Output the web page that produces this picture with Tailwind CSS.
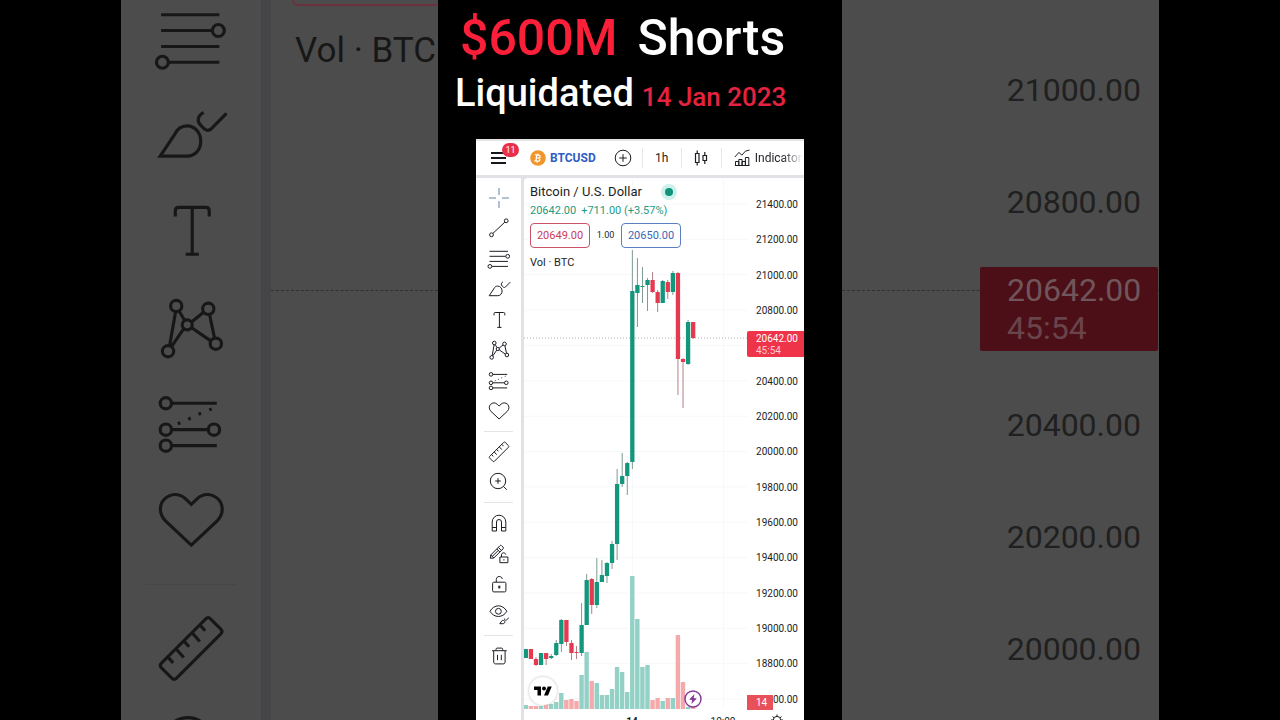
<!DOCTYPE html>
<html lang="en">
<head>
    <meta charset="UTF-8">
    <meta name="viewport" content="width=device-width, initial-scale=1.0">
    <title>$600M Shorts Liquidated</title>
    <script src="https://cdn.jsdelivr.net/npm/@tailwindcss/browser@4"></script>
</head>
<body class="bg-black font-[Roboto,sans-serif]">
    <!-- Icon sprite -->
    <svg class="hidden">
        <symbol id="i-cross" viewBox="0 0 28 28"><path d="M4 14h7M17 14h7M14 4v7M14 17v7"/></symbol>
        <symbol id="i-trend" viewBox="0 0 28 28"><circle cx="6.5" cy="20.8" r="1.9"/><circle cx="21.2" cy="6.8" r="1.9"/><path d="M7.9 19.4L19.8 8.2"/></symbol>
        <symbol id="i-fib" viewBox="0 0 28 28"><path d="M4.5 6.3H23M4.5 11.3h16.2M4.5 16.4H23M7 21.4h16"/><circle cx="22.7" cy="11.3" r="1.9"/><circle cx="4.9" cy="21.4" r="1.9"/></symbol>
        <symbol id="i-brush" viewBox="0 0 28 28"><path d="M4.200 20.700L8.700 14c.9-2 2.300-2.900 4-2.900 2.500 0 4.400 2.100 4.400 4.900 0 2.700-1.800 4.700-4.300 4.700zM18 6.800c-2 1.200-2.200 2.800-.8 4.200l1.100 1.100c.8.600 1.400.6 2.200-.1l4.800-4.900"/></symbol>
        <symbol id="i-text" viewBox="0 0 28 28"><path d="M9 9.400V7.600c0-.7.4-1.100 1.100-1.100h8.600c.7 0 1.100.4 1.100 1.100v1.800M14.400 6.500v14.900M12.300 21.400h4.200"/></symbol>
        <symbol id="i-pattern" viewBox="0 0 28 28"><circle cx="9.3" cy="7" r="1.8"/><circle cx="19.5" cy="7.9" r="1.8"/><circle cx="12.8" cy="13" r="1.6"/><circle cx="6.7" cy="21.4" r="1.8"/><circle cx="21.9" cy="19" r="1.8"/><path d="M9.1 8.8L7.2 19.6M10.2 8.6l1.8 3M11.7 14.2l-3.9 5.7M14.2 12.1l3.8-3.1M19.9 9.7l1.600 7.500M14.200 13.900l6.100 4.200"/></symbol>
        <symbol id="i-predict" viewBox="0 0 28 28"><circle cx="6" cy="7.4" r="1.8"/><circle cx="6" cy="15.8" r="1.8"/><circle cx="6" cy="20.9" r="1.8"/><circle cx="21.3" cy="15.8" r="1.8"/><path d="M7.8 7.4h14.4M7.8 15.8h11.7M7.8 20.9h14.4M9.800 13.900l.8-.3M13.100 12.500l.8-.4M16.400 10.900l.8-.3M19.800 9.500l.8-.3"/></symbol>
        <symbol id="i-heart" viewBox="0 0 28 28"><path d="M14.1 22L5.800 14.200C3.800 12 3.800 9.200 5.500 7.400c2-2 4.700-2 6.700-.2l1.900 1.800L16 7.200c1.900-1.800 4.700-1.800 6.700.2 1.700 1.900 1.700 4.600-.3 6.800z"/></symbol>
        <symbol id="i-ruler" viewBox="0 0 28 28"><path d="M4.600 18.500L18.700 4.400c.5-.5 1-.5 1.500 0l3.300 3.300c.5.500.5 1 0 1.500L9.400 23.300c-.5.500-1 .5-1.500 0L4.600 20c-.5-.5-.5-1 0-1.500zM6.600 16.500l1.700 1.900M9.200 13.900l2.500 2.800M11.700 11.400l1.700 1.900M14.300 8.800l2.500 2.800M16.800 6.300l1.700 1.900"/></symbol>
        <symbol id="i-zoom" viewBox="0 0 28 28"><circle cx="13" cy="13" r="7.700"/><path d="M18.500 18.500l3.300 3.300M10.200 13h5.600M13 10.200v5.600"/></symbol>
        <symbol id="i-magnet" viewBox="0 0 28 28"><path d="M7.200 22v-9a6.800 6.800 0 0 1 13.600 0v9h-4.300v-9a2.500 2.500 0 0 0-5 0v9zM7.200 18.500h4.300M16.500 18.500h4.300"/></symbol>
        <symbol id="i-penlock" viewBox="0 0 28 28"><path d="M5.300 18.300l.5-3.400L15 5.700c.5-.5 1.100-.5 1.600 0l1.500 1.500c.5.500.5 1.100 0 1.600l-9.300 9.200zM13.300 7.400l3.100 3.100M11.800 8.900l3 3.100M5.800 14.900l3 3.100M7.300 16.400l6-6M14.900 17h8v5.700h-8zM16.500 17v-2.200c0-2.500 3.900-2.700 4.200-.3M18.900 19.200v1.300"/></symbol>
        <symbol id="i-lock" viewBox="0 0 28 28"><rect x="7.600" y="12.200" width="13.300" height="9.700" rx="1.200"/><path d="M11.300 12.200V9.400c0-3.700 5.600-3.900 6-.4"/><path d="M14.300 15.700v2.700" stroke-width="2"/></symbol>
        <symbol id="i-eye" viewBox="0 0 28 28"><path d="M5 10.300C9 3 17.800 3 21.800 10.300 17.800 17.200 9 17.200 5 10.300z"/><circle cx="13.400" cy="10.300" r="2.900"/><path d="M14.800 22.700l1.700-2.500c1-1.300 3-1 3.300.5.200 1.200-.8 2-1.900 2zM19.600 17.600c-.5 1.200.7 2.100 1.700 1.500l2.500-2.300"/></symbol>
        <symbol id="i-trash" viewBox="0 0 28 28"><path d="M7 8.700h14.700M11 8.500V7.300c0-.8.400-1.200 1.200-1.200h4.300c.8 0 1.200.4 1.200 1.200v1.200M8.700 9v11c0 1.200.7 1.900 1.900 1.900h7.600c1.200 0 1.900-.7 1.900-1.900V9M12.500 12.800v5.400M16.300 12.800v5.400"/></symbol>
    </svg>

    <main class="flex h-screen overflow-hidden px-[121px]">
        <!-- Enlarged backdrop, left -->
        <section class="flex min-w-0 flex-1 overflow-hidden bg-[#4c4c4c] text-[#171717]" aria-hidden="true">
            <div class="w-[140px] shrink-0 fill-none stroke-current stroke-1">
                <div class="-mt-[5px] flex h-[569px] flex-col items-center justify-between">
                    <svg class="size-[88px]"><use href="#i-fib"/></svg>
                    <svg class="size-[88px]"><use href="#i-brush"/></svg>
                    <svg class="size-[88px]"><use href="#i-text"/></svg>
                    <svg class="size-[88px]"><use href="#i-pattern"/></svg>
                    <svg class="size-[88px]"><use href="#i-predict"/></svg>
                    <svg class="size-[88px]"><use href="#i-heart"/></svg>
                </div>
                <div class="mx-6 mt-5 h-px bg-[#464646]"></div>
                <div class="mt-5 flex flex-col items-center gap-2">
                    <svg class="size-[88px]"><use href="#i-ruler"/></svg>
                    <svg class="size-[88px]"><use href="#i-zoom"/></svg>
                </div>
            </div>
            <div class="w-[10px] shrink-0 bg-[#454547]"></div>
            <div class="min-w-0 flex-1">
                <div class="ml-[21px] h-[6px] rounded-bl-lg border-b-2 border-l-2 border-[#6b323d]"></div>
                <p class="mt-[25px] pl-6 text-[35px] leading-10 whitespace-nowrap">Vol · BTC</p>
                <div class="mt-[219px] border-t border-dashed border-[#303030]"></div>
            </div>
        </section>

        <!-- Video frame -->
        <section class="flex w-[404px] shrink-0 flex-col">
            <h1 class="h-[139px] shrink-0 pt-2 font-medium whitespace-nowrap text-white">
                <span class="flex items-baseline gap-5 pl-[22px] text-[50px] leading-[61px]"><span class="text-[#fb1f3a]">$600M</span><span>Shorts</span></span>
                <span class="flex items-baseline gap-2 pl-[17px] text-[38px] leading-[48px]"><span>Liquidated</span><span class="text-[26px] text-[#e3233f]">14 Jan 2023</span></span>
            </h1>

            <div class="mx-[38px] flex min-h-0 flex-1 flex-col overflow-hidden bg-[#e0e2e6] text-[#1c1e24]">
                <!-- Top toolbar -->
                <header class="flex h-9 shrink-0 items-center overflow-hidden border-t-2 border-[#e4e4e4] bg-white whitespace-nowrap">
                    <button class="relative ml-[14px] h-6 w-5 shrink-0" aria-label="Menu">
                        <svg class="size-5 fill-none stroke-[#15171c] stroke-2" viewBox="0 0 20 20"><path d="M1 5h15M1 10h15M1 15h15"/></svg>
                        <span class="absolute -top-[3px] left-3 h-[14px] w-[17px] rounded-full bg-[#e8304a] text-center text-[9px] leading-[14px] text-white">11</span>
                    </button>
                    <button class="ml-5 flex shrink-0 items-center gap-1 text-xs font-bold text-[#2f5cc4]">
                        <svg class="size-4" viewBox="0 0 16 16"><circle cx="8" cy="8" r="7.800" fill="#f0962b"/><path d="M6.800 4.300l-1 7.300M5 4.700l3.600.5c2.300.4 2 3-.3 2.800l-2-.3M8.200 8c2.600.5 2.100 3.500-.5 3.200l-3.300-.4M8 3.600l-.3 1.600M7.300 11.100L7 12.600" fill="none" stroke="#fff" stroke-width="1.200"/></svg>
                        <span>BTCUSD</span>
                    </button>
                    <button class="ml-[18px] shrink-0" aria-label="Compare">
                        <svg class="size-[18px] fill-none stroke-current" viewBox="0 0 18 18"><circle cx="9" cy="9" r="7.800"/><path d="M9 5.200v7.600M5.200 9h7.600"/></svg>
                    </button>
                    <span class="ml-[10px] h-5 w-px shrink-0 bg-[#e6e7ea]"></span>
                    <button class="w-[38px] shrink-0 text-xs">1h</button>
                    <span class="h-5 w-px shrink-0 bg-[#e6e7ea]"></span>
                    <button class="flex w-[39px] shrink-0 justify-center" aria-label="Candles">
                        <svg class="h-[18px] w-4 fill-none stroke-current" viewBox="0 0 16 18"><path d="M2.500 4.500h3.500v9H2.500zM4.200 1.500v3M4.200 13.500v3M10 6.500h3.500v5H10zM11.800 3v3.500M11.800 11.500V15" stroke-width="1.200"/></svg>
                    </button>
                    <span class="h-5 w-px shrink-0 bg-[#e6e7ea]"></span>
                    <button class="ml-3 flex min-w-0 items-center gap-1 text-xs">
                        <svg class="h-[18px] w-[17px] shrink-0 fill-none stroke-current" viewBox="0 0 17 18"><path d="M.8 8l4.200-4.600 2.800 2.800 3.600-4L15.500 1M1.500 16.500v-4h3.300v4M4.800 16.500v-6h3.300v6M8.100 16.500v-4h3.300v4M11.400 16.500V8.500h3.400v8zM1 16.500h14.500"/></svg>
                        <span class="bg-linear-to-r from-[#1c1e24] from-50% to-white to-90% bg-clip-text text-transparent">Indicators</span>
                    </button>
                </header>

                <div class="mt-[3px] flex min-h-0 flex-1">
                    <!-- Drawing tools -->
                    <nav class="w-[45px] shrink-0 overflow-hidden bg-white fill-none stroke-current pt-[6px]">
                        <div class="flex h-[241px] flex-col items-center justify-between">
                            <button class="size-7 text-[#6283a8]" aria-label="Cross"><svg class="size-7"><use href="#i-cross"/></svg></button>
                            <button class="size-7" aria-label="Trend line"><svg class="size-7"><use href="#i-trend"/></svg></button>
                            <button class="size-7" aria-label="Fib retracement"><svg class="size-7"><use href="#i-fib"/></svg></button>
                            <button class="size-7" aria-label="Brush"><svg class="size-7"><use href="#i-brush"/></svg></button>
                            <button class="size-7" aria-label="Text"><svg class="size-7"><use href="#i-text"/></svg></button>
                            <button class="size-7" aria-label="Pattern"><svg class="size-7"><use href="#i-pattern"/></svg></button>
                            <button class="size-7" aria-label="Prediction"><svg class="size-7"><use href="#i-predict"/></svg></button>
                            <button class="size-7" aria-label="Favorites"><svg class="size-7"><use href="#i-heart"/></svg></button>
                        </div>
                        <div class="mx-2 my-[6px] h-px bg-[#e3e4e8]"></div>
                        <div class="flex h-[58px] flex-col items-center justify-between">
                            <button class="size-7" aria-label="Measure"><svg class="size-7"><use href="#i-ruler"/></svg></button>
                            <button class="size-7" aria-label="Zoom in"><svg class="size-7"><use href="#i-zoom"/></svg></button>
                        </div>
                        <div class="mx-2 my-[6px] h-px bg-[#e3e4e8]"></div>
                        <div class="flex h-[120px] flex-col items-center justify-between">
                            <button class="size-7" aria-label="Magnet"><svg class="size-7"><use href="#i-magnet"/></svg></button>
                            <button class="size-7" aria-label="Stay in drawing mode"><svg class="size-7"><use href="#i-penlock"/></svg></button>
                            <button class="size-7" aria-label="Lock drawings"><svg class="size-7"><use href="#i-lock"/></svg></button>
                            <button class="size-7" aria-label="Hide drawings"><svg class="size-7"><use href="#i-eye"/></svg></button>
                        </div>
                        <div class="mx-2 my-[6px] h-px bg-[#e3e4e8]"></div>
                        <div class="flex justify-center">
                            <button class="size-7" aria-label="Remove"><svg class="size-7"><use href="#i-trash"/></svg></button>
                        </div>
                    </nav>

                    <!-- Chart -->
                    <div class="relative ml-[3px] flex min-w-0 flex-1 overflow-hidden rounded-tl-sm bg-white">
                        <svg id="chart" class="absolute top-0 left-0 h-[542px] w-[224px]" viewBox="524 178 224 542"></svg>

                        <div class="relative min-w-0 flex-1 pt-1 pl-[6px] whitespace-nowrap">
                            <div class="flex items-center gap-[23px]">
                                <h2 class="text-[13px] leading-5">Bitcoin / U.S. Dollar</h2>
                                <span class="size-2 rounded-full bg-[#10937a] ring-4 ring-[#cdf1ea]"></span>
                            </div>
                            <p class="flex gap-[5px] text-[11px] leading-[18px] text-[#1f9a80]"><span>20642.00</span><span>+711.00 (+3.57%)</span></p>
                            <div class="mt-[3px] flex items-center">
                                <button class="h-[25px] w-[60px] rounded border border-[#cc5068] bg-white text-[11px] leading-6 text-[#cc3c56]">20649.00</button>
                                <span class="w-[31px] text-center text-[9px]">1.00</span>
                                <button class="h-[25px] w-[60px] rounded border border-[#5b7fc0] bg-white text-[11px] leading-6 text-[#3b66b8]">20650.00</button>
                            </div>
                            <p class="mt-[6px] text-[11px] leading-[18px]">Vol · BTC</p>
                            <div class="absolute top-[499px] left-[5px] flex size-7 items-center justify-center rounded-full bg-white shadow-[0_0_3px_#bbb]">
                                <svg class="h-[14px] w-[18px]" viewBox="0 0 36 28"><path d="M14 23H7V12H0V5h14zM28 23h-8l7.500-18h8z"/><circle cx="20" cy="9" r="4"/></svg>
                            </div>
                            <svg class="absolute top-[512px] left-[160px] size-[18px]" viewBox="0 0 18 18"><circle cx="9" cy="9" r="8" fill="#fff" stroke="#83389a" stroke-width="1.400"/><path d="M10.500 4L5.200 9.600l3 .3L7.400 14l5.400-5.600-3.100-.3z" fill="#83389a"/></svg>
                        </div>

                        <!-- Price axis -->
                        <div class="relative w-[57px] shrink-0 pt-5 text-[10px]">
                            <ul class="flex h-[509px] flex-col justify-between pr-[6px] text-right leading-[14px]">
                                <li>21400.00</li>
                                <li>21200.00</li>
                                <li>21000.00</li>
                                <li>20800.00</li>
                                <li class="invisible">20600.00</li>
                                <li>20400.00</li>
                                <li>20200.00</li>
                                <li>20000.00</li>
                                <li>19800.00</li>
                                <li>19600.00</li>
                                <li>19400.00</li>
                                <li>19200.00</li>
                                <li>19000.00</li>
                                <li>18800.00</li>
                                <li>18600.00</li>
                            </ul>
                            <div class="absolute inset-x-0 top-[153px] rounded-l-xs bg-[#ef3348] pt-[2px] pl-[9px] leading-3 text-white">20642.00<br><span class="text-[#ffc9cf]">45:54</span></div>
                            <div class="absolute top-[517px] left-0 w-[26px] bg-[#e8505a] pl-[3px] text-center leading-[15px] text-white">14</div>
                            <svg class="absolute top-[536px] left-6 size-3 fill-none stroke-current" viewBox="0 0 12 12"><circle cx="6" cy="6" r="3.600"/><path d="M6 .5v2M1.500 2.500l1.500 1.300M10.500 2.500L9 3.800M0 6h2.400M9.600 6H12"/></svg>
                        </div>
                    </div>
                </div>
            </div>
        </section>

        <!-- Enlarged backdrop, right -->
        <section class="relative min-w-0 flex-1 overflow-hidden bg-[#4c4c4c] text-right text-[32px] leading-10 text-[#202020]" aria-hidden="true">
            <ul class="flex h-[669px] flex-col justify-between pt-[70px] pr-[18px]">
                <li>21000.00</li>
                <li>20800.00</li>
                <li class="invisible">20600.00</li>
                <li>20400.00</li>
                <li>20200.00</li>
                <li>20000.00</li>
            </ul>
            <div class="absolute inset-x-0 top-[290px] border-t border-dashed border-[#303030]"></div>
            <div class="absolute top-[267px] right-px w-[178px] rounded-xs bg-[#4c0f18] pt-1 pb-1 pl-[27px] text-left leading-[38px] text-[#70565a]">20642.00<br><span class="text-[#69454b]">45:54</span></div>
        </section>
    </main>

    <script>
        // up/down, body top, body bottom, wick top, wick bottom, volume top
        const candles = [
            ['u', 649, 658, 649, 658, 705], ['d', 649, 659, 649, 659, 706],
            ['d', 659, 665, 657, 666, 706], ['u', 653, 665, 653, 665, 706],
            ['d', 653, 659, 653, 665, 704], ['u', 656, 658, 654, 659, 704],
            ['u', 643, 655, 640, 656, 702], ['u', 620, 644, 619, 652, 693],
            ['d', 620, 642, 620, 646, 700], ['d', 643, 653, 640, 660, 699],
            ['d', 652, 653, 646, 659, 701], ['u', 625, 653, 603, 656, 675],
            ['u', 580, 625, 574, 625, 652], ['d', 579, 605, 578, 614, 681],
            ['u', 582, 605, 558, 608, 683], ['u', 575, 582, 560, 582, 695],
            ['u', 563, 576, 562, 583, 695], ['u', 544, 563, 541, 569, 689],
            ['u', 484, 544, 469, 560, 667], ['u', 476, 484, 453, 487, 672],
            ['u', 463, 476, 462, 495, 692], ['u', 291, 462, 250, 469, 576],
            ['u', 285, 293, 258, 327, 619], ['u', 286, 287, 267, 303, 667],
            ['u', 280, 285, 278, 311, 665], ['d', 280, 292, 272, 293, 700],
            ['d', 292, 303, 290, 312, 698], ['u', 281, 303, 280, 303, 701],
            ['d', 282, 292, 280, 299, 698], ['u', 273, 292, 271, 295, 698],
            ['d', 273, 359, 272, 395, 635], ['d', 359, 362, 358, 408, 682],
            ['u', 322, 364, 320, 365, 707], ['d', 322, 338, 322, 339, 707]
        ];

        let svg = '';
        for (let i = 0; i < 15; i++) {
            const y = 204 + i * 495 / 14;
            svg += `<path d="M524 ${y}H748" stroke="#f7f8fa"/>`;
        }
        svg += '<path d="M632.500 178V709M723.500 178V709" stroke="#f7f8fa"/>';
        svg += '<path d="M524 338H748" stroke="#b0b3b8" stroke-dasharray="1 2"/>';

        candles.forEach(([dir, top, bottom, high, low, vol], i) => {
            const x = 525.8 + i * 5.07;
            const color = dir === 'u' ? '#12967c' : '#e33a50';
            svg += `<rect x="${x - 2.2}" y="${vol}" width="4.4" height="${709 - vol}" fill="${dir === 'u' ? '#93d0c6' : '#f5a9ab'}"/>`;
            svg += `<rect x="${x - 0.4}" y="${high}" width="0.9" height="${low - high}" fill="${dir === 'u' ? '#6f8f8a' : '#a8737c'}"/>`;
            svg += `<rect x="${x - 2.1}" y="${top}" width="4.3" height="${bottom - top}" rx="0.5" fill="${color}"/>`;
        });

        svg += '<text x="632" y="725" text-anchor="middle" font-size="10" font-weight="700" fill="#1c1e24">14</text>';
        svg += '<text x="723" y="725" text-anchor="middle" font-size="10" fill="#1c1e24">10:00</text>';
        document.getElementById('chart').innerHTML = svg;
    </script>
</body>
</html>
